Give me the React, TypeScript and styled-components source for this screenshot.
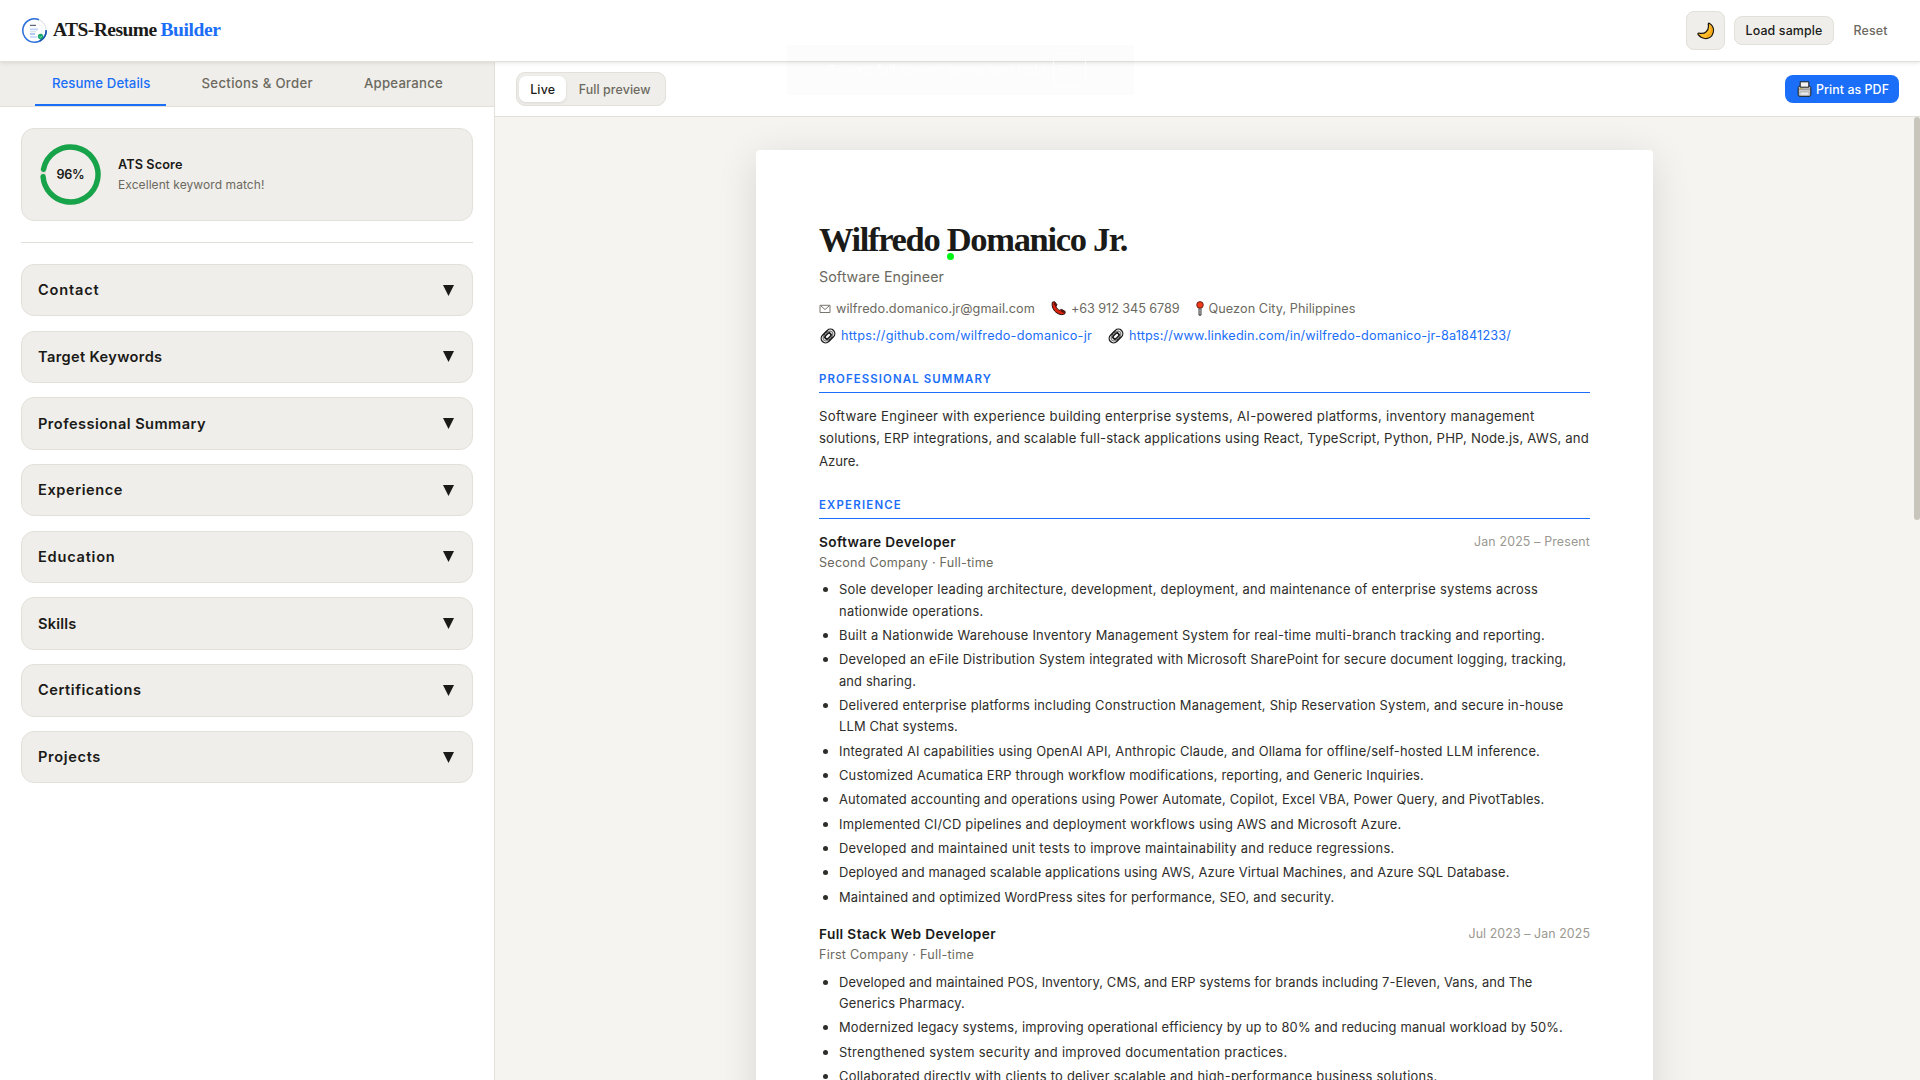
import React, { useLayoutEffect, useRef, useState } from "react";
import styled, { createGlobalStyle } from "styled-components";

const c = {
  blue: "#1a6ef7",
  ink: "#1a1a18",
  body: "#2e2d2a",
  muted: "#6b6960",
  faint: "#9a9890",
  surface: "#f0eeea",
  line: "#e2e0d8",
  canvas: "#f5f4f0",
};
const sans = `Inter, "Liberation Sans", sans-serif`;
const serif = `"Liberation Serif", serif`;

const GlobalStyle = createGlobalStyle`
  * { box-sizing: border-box; }
  html, body { margin: 0; height: 100%; overflow: hidden; }
  body { background: #fff; color: ${c.ink}; font-family: ${sans}; }
  button { font: inherit; color: inherit; margin: 0; padding: 0; border: 0; background: none; }
`;

/* Text set to a fixed measure: tracking is computed from its natural width. */
const Measure = styled.span`
  display: inline-block;
  white-space: nowrap;
`;
function Fit({ w, children }: { w: number; children: string }) {
  const ref = useRef<HTMLSpanElement>(null);
  const [tracking, setTracking] = useState(0);
  useLayoutEffect(() => {
    const el = ref.current;
    if (!el) return;
    el.style.letterSpacing = "0px";
    const natural = el.getBoundingClientRect().width;
    setTracking((w - natural) / children.length);
    el.style.letterSpacing = `${(w - natural) / children.length}px`;
  }, [w, children]);
  return (
    <Measure ref={ref} style={{ letterSpacing: `${tracking}px` }}>
      {children}
    </Measure>
  );
}

const Screen = styled.div`
  position: relative;
  display: flex;
  flex-direction: column;
  width: 1920px;
  height: 1080px;
  overflow: hidden;
`;
const Header = styled.header`
  position: relative;
  z-index: 2;
  flex: none;
  display: flex;
  align-items: center;
  justify-content: space-between;
  height: 62px;
  padding: 0 21px;
  background: #fff;
  border-bottom: 1px solid ${c.line};
  box-shadow: 0 1px 4px rgba(0, 0, 0, 0.1);
`;
const Brand = styled.div`
  display: flex;
  align-items: center;
  font: bold 19.5px/26px ${serif};
  svg { margin-right: 5px; }
`;
const BrandName = styled.span`
  padding-bottom: 1px;
`;
const BrandAccent = styled(BrandName)`
  margin-left: 4px;
  color: ${c.blue};
`;
const HeaderActions = styled.div`
  display: flex;
  align-items: center;
  font-size: 12.4px;
  font-weight: 500;
`;
const IconButton = styled.button`
  display: grid;
  place-items: center;
  width: 39px;
  height: 39px;
  margin-right: 9px;
  border: 1px solid ${c.line};
  border-radius: 8px;
  background: ${c.surface};
`;
const SampleButton = styled.button`
  width: 100px;
  height: 29px;
  border: 1px solid ${c.line};
  border-radius: 8px;
  background: ${c.surface};
`;
const ResetButton = styled.button`
  margin: 0 11.5px 0 19.5px;
  color: ${c.muted};
`;

const Main = styled.main`
  flex: 1;
  display: flex;
  min-height: 0;
`;
const Sidebar = styled.aside`
  width: 495px;
  border-right: 1px solid ${c.line};
  background: #fff;
`;
const Tabs = styled.nav`
  display: flex;
  height: 45px;
  padding-left: 35px;
  background: ${c.surface};
  border-bottom: 1px solid ${c.line};
`;
const Tab = styled.button<{ $active?: boolean }>`
  height: 44px;
  padding: 0 15.5px 0 17px;
  margin-right: 18.5px;
  font-size: 13.2px;
  font-weight: 500;
  line-height: 43px;
  color: ${(p) => (p.$active ? c.blue : c.muted)};
  border-bottom: 2px solid ${(p) => (p.$active ? c.blue : "transparent")};
`;
const SidebarBody = styled.div`
  padding: 21px;
`;
const ScoreCard = styled.section`
  display: flex;
  align-items: center;
  gap: 17px;
  height: 93px;
  padding-left: 18px;
  border: 1px solid ${c.line};
  border-radius: 13px;
  background: ${c.surface};
`;
const Ring = styled.div`
  display: grid;
  width: 61px;
  height: 61px;
  > * { grid-area: 1 / 1; place-self: center; }
  font-size: 12.6px;
  font-weight: 600;
`;
const ScoreTitle = styled.div`
  padding-top: 1px;
  font-size: 12.7px;
  font-weight: 600;
  line-height: 20px;
`;
const ScoreNote = styled.div`
  font-size: 12px;
  line-height: 20px;
  color: ${c.muted};
`;
const Divider = styled.hr`
  height: 1px;
  margin: 21px 0;
  border: 0;
  background: ${c.line};
`;
const SectionList = styled.div`
  display: flex;
  flex-direction: column;
  gap: 14.3px;
`;
const SectionRow = styled.button`
  display: flex;
  align-items: center;
  justify-content: space-between;
  height: 52.4px;
  padding: 0 18px 0 16px;
  border: 1px solid ${c.line};
  border-radius: 13px;
  background: ${c.surface};
  font-size: 14.6px;
  font-weight: 600;
`;

const Preview = styled.section`
  flex: 1;
  display: flex;
  flex-direction: column;
  min-width: 0;
`;
const Toolbar = styled.div`
  flex: none;
  display: flex;
  align-items: center;
  justify-content: space-between;
  height: 55px;
  padding: 0 21px;
  background: #fff;
  border-bottom: 1px solid ${c.line};
`;
const Segmented = styled.div`
  display: flex;
  width: 150px;
  height: 34px;
  padding: 3px 2px;
  border: 1px solid ${c.line};
  border-radius: 9px;
  background: ${c.surface};
`;
const Segment = styled.button<{ $active?: boolean }>`
  width: ${(p) => (p.$active ? "48px" : "98px")};
  height: 26px;
  border-radius: 7px;
  font-size: 12.4px;
  font-weight: 500;
  color: ${(p) => (p.$active ? c.ink : c.muted)};
  background: ${(p) => (p.$active ? "#fff" : "transparent")};
  box-shadow: ${(p) => (p.$active ? "0 1px 3px rgba(0,0,0,0.1)" : "none")};
`;
const PrintButton = styled.button`
  display: flex;
  align-items: center;
  gap: 4px;
  width: 114px;
  height: 28px;
  padding-left: 12px;
  border-radius: 8px;
  background: ${c.blue};
  color: #fff;
  font-size: 12.4px;
  font-weight: 500;
`;
const Canvas = styled.div`
  position: relative;
  flex: 1;
  min-height: 0;
  padding: 33px 0 0 261px;
  overflow: hidden;
  background: ${c.canvas};
`;
const ScrollThumb = styled.div`
  position: absolute;
  top: 0;
  right: 0;
  width: 6px;
  height: 403px;
  border-radius: 3px;
  background: #c8c6bc;
`;
const Paper = styled.article`
  position: relative;
  width: 897px;
  height: 1268px;
  padding: 63px;
  border-radius: 4px;
  background: #fff;
  box-shadow: 0 8px 40px rgba(0, 0, 0, 0.12);
`;
const Pointer = styled.i`
  position: absolute;
  left: 191px;
  top: 103px;
  width: 7px;
  height: 7px;
  border-radius: 50%;
  background: #00f514;
`;
const Name = styled.h1`
  height: 52px;
  margin: 0;
  font: bold 34.5px/53px ${serif};
`;
const Role = styled.div`
  font-size: 14.3px;
  line-height: 24px;
  margin-bottom: 6px;
  color: ${c.muted};
`;
const ContactRow = styled.div<{ $link?: boolean }>`
  display: flex;
  align-items: center;
  gap: 16px;
  height: 27px;
  padding-left: ${(p) => (p.$link ? "1px" : "0")};
  font-size: 12.7px;
  line-height: 27px;
  color: ${(p) => (p.$link ? c.blue : c.muted)};
`;
const ContactItem = styled.span`
  display: flex;
  align-items: center;
  gap: 5px;
`;
const SectionTitle = styled.h2<{ $gap: number }>`
  height: 23px;
  margin: ${(p) => p.$gap}px 0 0;
  border-bottom: 1px solid ${c.blue};
  font-size: 11.4px;
  font-weight: 600;
  line-height: 18px;
  color: ${c.blue};
`;
const Line = styled.div``;
const Summary = styled.div`
  height: 67px;
  margin-top: 12px;
  font-size: 13.2px;
  line-height: 22.4px;
  color: ${c.body};
`;
const Job = styled.section`
  margin-top: 12px;
  & + & { margin-top: 15.2px; }
`;
const JobHead = styled.div`
  display: flex;
  justify-content: space-between;
  font-size: 13.7px;
  font-weight: 600;
  line-height: 22px;
`;
const JobDate = styled.span`
  font-size: 12.4px;
  font-weight: 400;
  color: ${c.faint};
`;
const Company = styled.div`
  font-size: 12.6px;
  line-height: 20px;
  color: ${c.muted};
`;
const Bullets = styled.ul`
  margin: 6.4px 0 0;
  padding: 0;
  list-style: none;
  font-size: 12.9px;
  line-height: 21.3px;
  color: ${c.body};
`;
const Bullet = styled.li`
  display: flex;
  margin-bottom: 3.05px;
  &::before {
    content: "";
    flex: none;
    width: 5px;
    height: 5px;
    margin: 8px 11px 0 4px;
    border-radius: 50%;
    background: ${c.body};
  }
`;

const Toast = styled.div`
  position: absolute;
  z-index: 3;
  left: 787px;
  top: 45px;
  display: flex;
  align-items: center;
  gap: 7px;
  width: 347px;
  height: 50px;
  padding-left: 42px;
  background: rgba(0, 0, 0, 0.01);
  color: rgba(255, 255, 255, 0.8);
  font: 14.5px/20px "Open Sans", sans-serif;
`;
const Key = styled.span`
  width: 33px;
  height: 34px;
  border: 1px solid rgba(255, 255, 255, 0.6);
  text-align: center;
  line-height: 32px;
`;

const Logo = () => (
  <svg width="27" height="27" viewBox="0 0 27 27" fill="none">
    <circle cx="13.5" cy="13.5" r="11.7" stroke="#e3e7ec" strokeWidth="1.2" />
    <path d="M18 2.7A11.7 11.7 0 1 0 25.2 13.2" stroke="#2a6fdb" strokeWidth="1.5" />
    <path d="M25.2 13.2A11.7 11.7 0 0 1 19 23.8" stroke="#1d4fae" strokeWidth="1.4" />
    <path d="M18 5.5v3h3v12" stroke="#eef0f3" strokeWidth=".8" />
    <path d="M9 8.4h6" stroke="#5f6b7a" strokeWidth="1.3" />
    <path d="M9 12.4h8M9 20h7" stroke="#bcd4fb" strokeWidth="1.7" />
    <path d="M9 14.8h6" stroke="#cfd5de" strokeWidth="1" />
    <path d="M9 17h5" stroke="#7fa9f0" strokeWidth="1.2" />
    <circle cx="19.6" cy="19.5" r="2.7" fill="#18a66a" />
    <path d="m18.3 19.6 1 1 1.7-2" stroke="#b9ecd4" strokeWidth=".7" />
  </svg>
);
const Moon = () => (
  <svg width="18" height="18" viewBox="0 0 18 18">
    <path
      d="M12.2 1.3c3.2 1.9 4.9 5.4 4 9.2-1.1 4.2-4.6 6.5-8.4 6-3-.4-5.2-2-6.8-4.1-.3-1 .6-1.5 1.5-1.2 2.3.5 4.8.3 6.7-1.5 2-1.8 2.6-4.3 2.1-7-.1-.9.2-1.7.9-1.4Z"
      fill="#fdbd2c" stroke="#1b1608" strokeWidth="1.2" strokeLinejoin="round"
    />
    <path d="M14.4 5.5c.8 3.5-.7 7-4.2 8.6" stroke="#f5a014" strokeWidth="1.3" fill="none" strokeLinecap="round" />
  </svg>
);
const Printer = () => (
  <svg width="15" height="16" viewBox="0 0 15 16" stroke="#1c1c1c" strokeWidth="1" strokeLinejoin="round">
    <path d="M1.2 6.5 2.5 5h10l1.3 1.5v7l-1 1.8H2.2l-1-1.8Z" fill="#c9c9c9" />
    <path d="M3.2.8h8.6v5.4H3.2Z" fill="#f2f2f2" />
    <path d="M2 8.2h11" stroke="#8d8d8d" />
    <path d="M3 11h9v3.2H3Z" fill="#ececec" stroke="#a2a2a2" strokeWidth=".7" />
    <path d="M3.5 7.5h2" stroke="#c7ae32" />
  </svg>
);
const Caret = () => (
  <svg width="11" height="11" viewBox="0 0 11 11">
    <path d="M0 0h11L5.5 11Z" fill={c.ink} />
  </svg>
);
const Mail = () => (
  <svg width="12" height="10" viewBox="0 0 12 10" fill="none" stroke="#77756d" strokeWidth="1">
    <path d="M1 1.3h10v7.2H1Z" />
    <path d="m2 2 4 3.6L10 2" />
  </svg>
);
const Phone = () => (
  <svg width="15" height="15" viewBox="0 0 15 15">
    <path
      d="M1.4 1.2 3.6.7l2.3 3-.9 2c.7 1.7 2 2.9 3.7 3.6l1.9-.9 3.5 2-.1 2.2c-1.9 1.6-4.9 1.4-7.9-.5C2.7 9.9.3 5.7 1.4 1.2Z"
      fill="#d8210e" stroke="#24100c" strokeWidth="1" strokeLinejoin="round"
    />
    <path d="m3.6.7 2.3 3-.9 2-2.3-2.4ZM10.6 8.4l3.5 2-.1 2.2-4.3-2.2Z" fill="#5b120b" />
  </svg>
);
const Pin = () => (
  <svg width="8" height="15" viewBox="0 0 8 15">
    <path d="M3 6h2v8.2H3Z" fill="#dcdcdc" stroke="#222" strokeWidth=".9" />
    <circle cx="4" cy="3.9" r="3.3" fill="#f23a1d" stroke="#4a150c" strokeWidth=".8" />
  </svg>
);
const Link = () => (
  <svg width="16" height="16" viewBox="0 0 16 16" fill="none">
    <g transform="rotate(-45 8 8)">
      <rect x="0.2" y="3.6" width="11.4" height="8.8" rx="4.4" stroke="#181818" strokeWidth="1.3" />
      <rect x="4.4" y="3.6" width="11.4" height="8.8" rx="4.4" stroke="#181818" strokeWidth="1.3" />
      <rect x="2.3" y="5.4" width="11.4" height="5.2" rx="2.6" stroke="#777" strokeWidth="1.1" />
      <rect x="4.8" y="6.2" width="6.4" height="3.6" rx="1.8" stroke="#181818" strokeWidth="1.3" />
    </g>
  </svg>
);

type Text = [string, number];

const sections: Text[] = [
  ["Contact", 61.5],
  ["Target Keywords", 124.5],
  ["Professional Summary", 168],
  ["Experience", 85],
  ["Education", 77.5],
  ["Skills", 38.5],
  ["Certifications", 103.5],
  ["Projects", 63],
];
const summary: Text[] = [
  ["Software Engineer with experience building enterprise systems, AI-powered platforms, inventory management", 715.5],
  ["solutions, ERP integrations, and scalable full-stack applications using React, TypeScript, Python, PHP, Node.js, AWS, and", 770],
  ["Azure.", 40],
];
const jobs: { title: Text; date: Text; company: Text; bullets: Text[][] }[] = [
  {
    title: ["Software Developer", 137],
    date: ["Jan 2025 – Present", 116],
    company: ["Second Company · Full-time", 174.5],
    bullets: [
      [
        ["Sole developer leading architecture, development, deployment, and maintenance of enterprise systems across", 699],
        ["nationwide operations.", 144.5],
      ],
      [["Built a Nationwide Warehouse Inventory Management System for real-time multi-branch tracking and reporting.", 706]],
      [
        ["Developed an eFile Distribution System integrated with Microsoft SharePoint for secure document logging, tracking,", 727.5],
        ["and sharing.", 77],
      ],
      [
        ["Delivered enterprise platforms including Construction Management, Ship Reservation System, and secure in-house", 724.5],
        ["LLM Chat systems.", 119],
      ],
      [["Integrated AI capabilities using OpenAI API, Anthropic Claude, and Ollama for offline/self-hosted LLM inference.", 701]],
      [["Customized Acumatica ERP through workflow modifications, reporting, and Generic Inquiries.", 585]],
      [["Automated accounting and operations using Power Automate, Copilot, Excel VBA, Power Query, and PivotTables.", 705.5]],
      [["Implemented CI/CD pipelines and deployment workflows using AWS and Microsoft Azure.", 562.5]],
      [["Developed and maintained unit tests to improve maintainability and reduce regressions.", 555.5]],
      [["Deployed and managed scalable applications using AWS, Azure Virtual Machines, and Azure SQL Database.", 670.5]],
      [["Maintained and optimized WordPress sites for performance, SEO, and security.", 495.5]],
    ],
  },
  {
    title: ["Full Stack Web Developer", 177],
    date: ["Jul 2023 – Jan 2025", 121.5],
    company: ["First Company · Full-time", 155],
    bullets: [
      [
        ["Developed and maintained POS, Inventory, CMS, and ERP systems for brands including 7-Eleven, Vans, and The", 693.5],
        ["Generics Pharmacy.", 126],
      ],
      [["Modernized legacy systems, improving operational efficiency by up to 80% and reducing manual workload by 50%.", 724]],
      [["Strengthened system security and improved documentation practices.", 448.5]],
      [["Collaborated directly with clients to deliver scalable and high-performance business solutions.", 598.5]],
    ],
  },
];

export default function App() {
  return (
    <Screen>
      <GlobalStyle />
      <Header>
        <Brand>
          <Logo />
          <BrandName>
            <Fit w={103.5}>ATS-Resume</Fit>
          </BrandName>
          <BrandAccent>
            <Fit w={60}>Builder</Fit>
          </BrandAccent>
        </Brand>
        <HeaderActions>
          <IconButton aria-label="Toggle theme"><Moon /></IconButton>
          <SampleButton><Fit w={77}>Load sample</Fit></SampleButton>
          <ResetButton><Fit w={34}>Reset</Fit></ResetButton>
        </HeaderActions>
      </Header>

      <Main>
        <Sidebar>
          <Tabs>
            <Tab $active><Fit w={98.5}>Resume Details</Fit></Tab>
            <Tab><Fit w={111.5}>Sections & Order</Fit></Tab>
            <Tab><Fit w={79}>Appearance</Fit></Tab>
          </Tabs>
          <SidebarBody>
            <ScoreCard>
              <Ring>
                <svg width="61" height="61" viewBox="0 0 61 61" fill="none">
                  <circle cx="30.5" cy="30.5" r="27.5" stroke={c.line} strokeWidth="5.4" />
                  <circle
                    cx="30.5" cy="30.5" r="27.5" stroke="#16a34a" strokeWidth="5.4"
                    strokeLinecap="round" strokeDasharray="165 173" transform="rotate(-169 30.5 30.5)"
                  />
                </svg>
                <Fit w={28}>96%</Fit>
              </Ring>
              <div>
                <ScoreTitle><Fit w={64.5}>ATS Score</Fit></ScoreTitle>
                <ScoreNote><Fit w={146.5}>Excellent keyword match!</Fit></ScoreNote>
              </div>
            </ScoreCard>
            <Divider />
            <SectionList>
              {sections.map(([label, w]) => (
                <SectionRow key={label}>
                  <Fit w={w}>{label}</Fit>
                  <Caret />
                </SectionRow>
              ))}
            </SectionList>
          </SidebarBody>
        </Sidebar>

        <Preview>
          <Toolbar>
            <Segmented>
              <Segment $active><Fit w={25}>Live</Fit></Segment>
              <Segment><Fit w={72}>Full preview</Fit></Segment>
            </Segmented>
            <PrintButton>
              <Printer />
              <Fit w={73}>Print as PDF</Fit>
            </PrintButton>
          </Toolbar>
          <Canvas>
            <Paper>
              <Name><Fit w={308}>Wilfredo Domanico Jr.</Fit></Name>
              <Pointer />
              <Role><Fit w={125}>Software Engineer</Fit></Role>
              <ContactRow>
                <ContactItem><Mail /><Fit w={199}>wilfredo.domanico.jr@gmail.com</Fit></ContactItem>
                <ContactItem><Phone /><Fit w={108.5}>+63 912 345 6789</Fit></ContactItem>
                <ContactItem><Pin /><Fit w={147}>Quezon City, Philippines</Fit></ContactItem>
              </ContactRow>
              <ContactRow $link>
                <ContactItem><Link /><Fit w={251}>https://github.com/wilfredo-domanico-jr</Fit></ContactItem>
                <ContactItem><Link /><Fit w={382}>https://www.linkedin.com/in/wilfredo-domanico-jr-8a1841233/</Fit></ContactItem>
              </ContactRow>

              <SectionTitle $gap={21}><Fit w={173}>PROFESSIONAL SUMMARY</Fit></SectionTitle>
              <Summary>
                {summary.map(([t, w]) => <Line key={t}><Fit w={w}>{t}</Fit></Line>)}
              </Summary>

              <SectionTitle $gap={24}><Fit w={83}>EXPERIENCE</Fit></SectionTitle>
              {jobs.map((job) => (
                <Job key={job.title[0]}>
                  <JobHead>
                    <Fit w={job.title[1]}>{job.title[0]}</Fit>
                    <JobDate><Fit w={job.date[1]}>{job.date[0]}</Fit></JobDate>
                  </JobHead>
                  <Company><Fit w={job.company[1]}>{job.company[0]}</Fit></Company>
                  <Bullets>
                    {job.bullets.map((lines) => (
                      <Bullet key={lines[0][0]}>
                        <div>
                          {lines.map(([t, w]) => <Line key={t}><Fit w={w}>{t}</Fit></Line>)}
                        </div>
                      </Bullet>
                    ))}
                  </Bullets>
                </Job>
              ))}
            </Paper>
            <ScrollThumb />
          </Canvas>
        </Preview>
      </Main>

      <Toast>
        <Fit w={217}>To exit full screen, press and hold</Fit>
        <Key>Esc</Key>
      </Toast>
    </Screen>
  );
}
